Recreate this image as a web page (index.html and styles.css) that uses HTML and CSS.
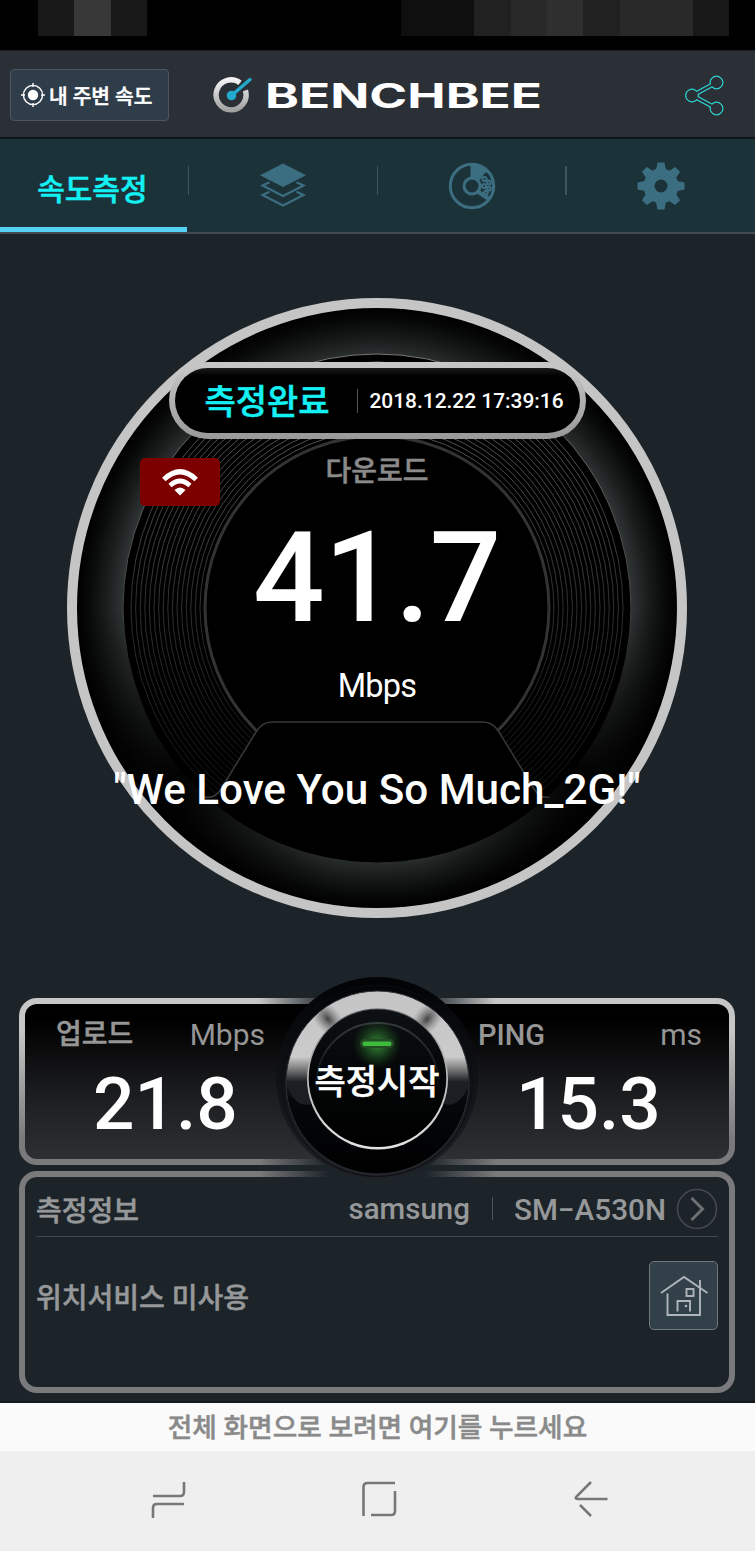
FILE: index.html
```html
<!DOCTYPE html>
<html lang="ko">
<head>
  <meta charset="UTF-8" />
  <title>BENCHBEE</title>
  <link rel="stylesheet" href="styles.css">
</head>
<body>

  <div class="status-bar">
    <div class="blocks">
      <i class="c1"></i><i class="c2"></i><i class="c1"></i>
    </div>
    <div class="blocks">
      <i class="c3"></i><i class="c3"></i><i class="c4"></i><i class="c5"></i><i class="c6"></i><i class="c4"></i><i class="c5"></i><i class="c5"></i><i class="c1"></i>
    </div>
  </div>

  <header class="header">
    <button class="near-btn">
      <svg width="24" height="24" viewBox="0 0 24 24">
        <circle cx="12" cy="12" r="9.6" fill="none" stroke="#fff" stroke-width="1.4"/>
        <circle cx="12" cy="12" r="5.2" fill="#fff"/>
        <path d="M12 0v4M12 20v4M0 12h4M20 12h4" stroke="#fff" stroke-width="1.4"/>
      </svg>
      <span>내 주변 속도</span>
    </button>
    <svg class="logo" width="330" height="40" viewBox="0 0 330 40">
      <defs>
        <linearGradient id="silver" x1="0" y1="0" x2="0" y2="1">
          <stop offset="0" stop-color="#f2f2f2"/>
          <stop offset="1" stop-color="#a2a2a2"/>
        </linearGradient>
      </defs>
      <path d="M27 7.8A15 15 0 1 0 32.4 15.4" fill="none" stroke="url(#silver)" stroke-width="5.4"/>
      <path d="M18.5 20.5L37 4.5" stroke="#22a9cb" stroke-width="3.4" stroke-linecap="round"/>
      <circle cx="18.5" cy="20.5" r="4.8" fill="#22a9cb"/>
      <text class="wordmark" x="52" y="33" textLength="277" lengthAdjust="spacingAndGlyphs">BENCHBEE</text>
    </svg>
    <svg class="share" width="42" height="42" viewBox="0 0 42 42">
      <g fill="#2fd6d6" stroke="#2fd6d6">
        <path d="M9.5 21.5L33.5 8.5M9.5 21.5L33.5 34.5" stroke-width="4.6"/>
        <circle cx="9" cy="21.5" r="6.5"/><circle cx="33.5" cy="8.5" r="6.5"/><circle cx="33.5" cy="34.5" r="6.5"/>
      </g>
      <g fill="#2b2f36">
        <path d="M9.5 21.5L33.5 8.5M9.5 21.5L33.5 34.5" stroke="#2b2f36" stroke-width="2"/>
        <circle cx="9" cy="21.5" r="5.7"/><circle cx="33.5" cy="8.5" r="5.7"/><circle cx="33.5" cy="34.5" r="5.7"/>
      </g>
    </svg>
  </header>

  <nav class="tabs">
    <div class="tab active">속도측정</div>
    <div class="tab">
      <svg width="48" height="48" viewBox="0 0 48 48" fill="none" stroke="#3c6e81" stroke-width="2.2">
        <path d="M24 1.5L47 13.2L24 25L1 13.2Z" fill="#3c6e81" stroke="none"/>
        <path d="M10.5 20.2L3.5 23.5L24 34L44.500 23.5L37.5 20.2"/>
        <path d="M10.5 29.800L3.5 33L24 43.500L44.500 33L37.500 29.800"/>
      </svg>
    </div>
    <div class="tab">
      <svg width="48" height="48" viewBox="0 0 48 48" fill="none" stroke="#3c6e81">
        <circle cx="24" cy="24" r="21.7" stroke-width="3"/>
        <path d="M22.500 2V17L31 19L37.500 10.500L41 11Q34 2 24 2Z" fill="#3c6e81" stroke="none"/>
        <circle cx="24" cy="24" r="8" stroke-width="3"/>
        <path d="M29 29L41 37" stroke-width="4.500"/>
        <g fill="none" stroke-width="2.200">
          <circle cx="36.500" cy="17" r="2"/><circle cx="41" cy="20.500" r="1.800"/>
          <circle cx="36" cy="24" r="2"/><circle cx="41" cy="26.500" r="1.800"/><circle cx="38" cy="30.500" r="1.800"/>
        </g>
      </svg>
    </div>
    <div class="tab">
      <svg width="48" height="48" viewBox="-24 -24 48 48">
        <circle r="12" fill="none" stroke="#3c6e81" stroke-width="11"/>
        <g fill="#3c6e81">
          <path id="tooth" d="M-5.200 -15L-3.500 -23.500H3.500L5.200 -15Z"/>
          <use href="#tooth" transform="rotate(45)"/><use href="#tooth" transform="rotate(90)"/>
          <use href="#tooth" transform="rotate(135)"/><use href="#tooth" transform="rotate(180)"/>
          <use href="#tooth" transform="rotate(225)"/><use href="#tooth" transform="rotate(270)"/>
          <use href="#tooth" transform="rotate(315)"/>
        </g>
      </svg>
    </div>
  </nav>

  <main>
    <section class="gauge">
      <svg class="dial" width="600" height="600" viewBox="-300 -300 600 600">
        <defs>
          <linearGradient id="ringFade" gradientUnits="userSpaceOnUse" x1="0" y1="-250" x2="0" y2="190">
            <stop offset="0" stop-color="#6a6a6a"/>
            <stop offset="0.35" stop-color="#484a4a"/>
            <stop offset="0.6" stop-color="#303232"/>
            <stop offset="1" stop-color="#151616"/>
          </linearGradient>
          <linearGradient id="edgeFade" x1="0" y1="0" x2="0" y2="1">
            <stop offset="0" stop-color="#777"/>
            <stop offset="0.5" stop-color="#444"/>
            <stop offset="0.75" stop-color="#000"/>
          </linearGradient>
        </defs>
        <circle r="254" fill="#000" stroke="url(#edgeFade)" stroke-width="1"/>
        <g id="rings" fill="none" stroke="url(#ringFade)" stroke-width="0.9"></g>
        <circle r="172" fill="#000" stroke="#333" stroke-width="3"/>
        <path d="M-169 189Q-160 190 -154 180L-121 124Q-115 114 -105 114H106Q116 114 122 124L155 180Q161 190 169 189A253.5 253.5 0 0 1 -169 189Z" fill="#000"/>
        <path d="M-172 189Q-162 191 -156 181L-121 124Q-115 114 -105 114H106Q116 114 122 124L157 181Q163 191 172 189" fill="none" stroke="#383838" stroke-width="1.5"/>
      </svg>
      <div class="result">
        <div class="pill">
          <span class="done">측정완료</span>
          <span class="date">2018.12.22 17:39:16</span>
        </div>
        <div class="label">다운로드</div>
        <div class="value">41.7</div>
        <div class="unit">Mbps</div>
        <div class="ssid">"We Love You So Much_2G!"</div>
      </div>
      <div class="wifi">
        <svg width="38" height="28" viewBox="0 0 38 28" fill="none" stroke="#fff">
          <path d="M2.8 11.5Q19 -4 35.2 11.5" stroke-width="5"/>
          <path d="M9 17.5Q19 8.5 29 17.5" stroke-width="4.6"/>
          <path d="M13.5 22Q19 17 24.5 22L19 27.5Z" fill="#fff" stroke="none"/>
        </svg>
      </div>
    </section>

    <section class="panel speeds">
      <div class="speed up">
        <div class="speed-head"><b class="ko">업로드</b><span>Mbps</span></div>
        <div class="speed-value">21.8</div>
      </div>
      <div class="speed ping">
        <div class="speed-head"><b>PING</b><span>ms</span></div>
        <div class="speed-value">15.3</div>
      </div>
      <button class="start">
        <svg width="204" height="204" viewBox="-102 -102 204 204">
          <defs>
            <linearGradient id="metal" x1="0" y1="0" x2="0" y2="1">
              <stop offset="0" stop-color="#c4c4c4"/>
              <stop offset="0.36" stop-color="#cbcbcb"/>
              <stop offset="0.43" stop-color="#777"/>
              <stop offset="0.5" stop-color="#17191c"/>
              <stop offset="0.6" stop-color="#05070a"/>
              <stop offset="1" stop-color="#000"/>
            </linearGradient>
            <linearGradient id="housing" x1="0" y1="0" x2="0" y2="1">
              <stop offset="0" stop-color="#020305"/>
              <stop offset="0.4" stop-color="#0c0e12"/>
              <stop offset="1" stop-color="#1e2226"/>
            </linearGradient>
            <linearGradient id="rim" x1="0" y1="0" x2="0" y2="1">
              <stop offset="0" stop-color="#555"/>
              <stop offset="0.3" stop-color="#aaa"/>
              <stop offset="1" stop-color="#e2e2e4"/>
            </linearGradient>
            <linearGradient id="glass" x1="0" y1="0" x2="0" y2="1">
              <stop offset="0" stop-color="#0d1114"/>
              <stop offset="0.5" stop-color="#030506"/>
              <stop offset="1" stop-color="#000"/>
            </linearGradient>
            <linearGradient id="arc" x1="0" y1="0" x2="0" y2="1">
              <stop offset="0" stop-color="#34383b"/>
              <stop offset="0.6" stop-color="#34383b" stop-opacity="0"/>
            </linearGradient>
            <radialGradient id="shade">
              <stop offset="0" stop-color="#222" stop-opacity="0.8"/>
              <stop offset="1" stop-color="#666" stop-opacity="0"/>
            </radialGradient>
            <radialGradient id="led">
              <stop offset="0" stop-color="#45b845" stop-opacity="0.75"/>
              <stop offset="1" stop-color="#2d7a2d" stop-opacity="0"/>
            </radialGradient>
            <clipPath id="metalClip"><circle cx="0.5" cy="4.5" r="91"/></clipPath>
          </defs>
          <circle r="101" fill="url(#housing)"/>
          <circle cy="3" r="95.5" fill="none" stroke="#0c0d10"/>
          <circle cx="0.5" cy="4.5" r="91.5" fill="url(#metal)" stroke="#2c2f33"/>
          <g clip-path="url(#metalClip)">
            <ellipse cx="-49" cy="-59" rx="13" ry="22" fill="url(#shade)" transform="rotate(-40 -49 -59)"/>
            <ellipse cx="50" cy="-59" rx="13" ry="22" fill="url(#shade)" transform="rotate(40 50 -59)"/>
            <path d="M-90 8C-84 24 -75 29 -66 26V4H-90ZM91 8C85 24 76 29 67 26V4H91Z" fill="#1b1e22"/>
          </g>
          <circle cx="0.5" cy="1" r="70.5" fill="url(#rim)"/>
          <circle cx="0.5" cy="0.2" r="68.8" fill="url(#glass)"/>
          <circle cx="0.5" cy="6" r="61" fill="none" stroke="url(#arc)" stroke-width="2"/>
          <circle cy="-34" r="24" fill="url(#led)"/>
          <rect x="-17" y="-39" width="34" height="9" rx="4.5" fill="#244a26"/>
          <rect x="-14.5" y="-36.5" width="29" height="4.5" rx="2" fill="#3dbb3a"/>
        </svg>
        <span>측정시작</span>
      </button>
    </section>

    <section class="panel info">
      <div class="info-row">
        <span class="info-title ko">측정정보</span>
        <span class="brand">samsung</span>
        <span class="model">SM−A530N</span>
        <svg width="42" height="42" viewBox="0 0 42 42" fill="none">
          <circle cx="21" cy="21" r="19.5" stroke="#474b50" stroke-width="1.5"/>
          <path d="M15.5 10L26.5 21L15.5 32" stroke="#6c7075" stroke-width="3"/>
        </svg>
      </div>
      <div class="location-row">
        <span class="ko">위치서비스 미사용</span>
        <button class="home-btn">
          <svg width="48" height="42" viewBox="0 0 48 42" fill="none" stroke="#b0b5bb" stroke-width="1.9">
            <path d="M1 18L24 2L47.5 18"/>
            <path d="M7.5 18.5V40H40V5"/>
            <rect x="26.5" y="14" width="7" height="7"/>
            <path d="M17.500 36.500V26H30V36.500"/>
            <circle cx="26" cy="31" r="1.300" fill="#b0b5bb" stroke="none"/>
          </svg>
        </button>
      </div>
    </section>
  </main>

  <div class="hint">전체 화면으로 보려면 여기를 누르세요</div>

  <footer class="nav-bar">
    <svg width="36" height="38" viewBox="0 0 36 38">
      <path d="M33 1V11Q33 15 29 15H2M2 37V27Q2 23 6 23H33"/>
    </svg>
    <svg width="36" height="38" viewBox="0 0 36 38">
      <path d="M1.5 35V6Q1.5 2 5.5 2H33M33 10V30Q33 34 29 34H9"/>
    </svg>
    <svg width="36" height="38" viewBox="0 0 36 38">
      <path d="M18 1L3.500 15.500Q1.500 18 4.500 18H34.500M7 24L18 35"/>
    </svg>
  </footer>

  <script>
    // grooves between the inner disc and the bezel
    const rings = document.getElementById('rings');
    for (let r = 177; r < 248; r += 4.6) {
      const c = document.createElementNS('http://www.w3.org/2000/svg', 'circle');
      c.setAttribute('r', r);
      rings.appendChild(c);
    }
  </script>
</body>
</html>
```
FILE: styles.css
```css
* {
  box-sizing: border-box;
}

body {
  margin: 0;
  width: 755px;
  height: 1551px;
  overflow: hidden;
  display: flex;
  flex-direction: column;
  background: #1d2429;
  color: #fff;
  font-family: Roboto, "Noto Sans CJK KR", sans-serif;
  font-weight: 500;
}

svg {
  display: block;
  flex: none;
}

button {
  padding: 0;
  font: inherit;
  color: inherit;
}

/* korean text is drawn a touch heavier */
.ko, .near-btn, .tab.active, .done, .label, .start, .hint {
  -webkit-text-stroke: 0.5px currentColor;
}

/* status bar */
.status-bar {
  height: 50px;
  padding: 0 26px 0 38px;
  display: flex;
  justify-content: space-between;
  background: #000;
}

.blocks {
  display: flex;
  height: 36px;
}

.blocks i { width: 36.4px; }
.c1 { background: #181818; }
.c2 { background: #383838; }
.c3 { background: #0f0f0f; }
.c4 { background: #212121; }
.c5 { background: #292929; }
.c6 { background: #2f2f2f; }

/* header */
.header {
  height: 89px;
  padding: 2px 30px 1px 10px;
  display: flex;
  align-items: center;
  background: #2b2f36;
  border-top: 1px solid #1c1f22;
  border-bottom: 2px solid #10171b;
}

.near-btn {
  width: 159px;
  height: 52px;
  padding: 1px 0 0 10px;
  display: flex;
  align-items: center;
  gap: 4px;
  background: #2f3c49;
  border: 1px solid #4d565f;
  border-radius: 4px;
  font-size: 20.3px;
  white-space: nowrap;
}

.logo {
  margin-left: 44px;
}

.wordmark {
  font-family: Inter, sans-serif;
  font-size: 33.5px;
  font-weight: 700;
  fill: #fff;
}

.share {
  margin-left: auto;
}

/* tabs */
.tabs {
  height: 95px;
  display: flex;
  background: #1c3239;
  border-bottom: 2px solid #434b50;
}

.tab {
  position: relative;
  width: 25%;
  display: flex;
  align-items: center;
  justify-content: center;
}

.tab + .tab::before {
  content: "";
  position: absolute;
  left: -1px;
  top: 27px;
  width: 1.5px;
  height: 29px;
  background: #3d565c;
}

.tab.active {
  color: #14f1f5;
  font-size: 30px;
  padding: 2px 4px 0 0;
}

.tab.active::after {
  content: "";
  position: absolute;
  left: 0;
  bottom: 0;
  width: 187px;
  height: 5px;
  background: #55d2f3;
}

/* gauge */
main {
  height: 1169px;
  border-bottom: 2px solid #15191d;
}

.gauge {
  position: relative;
  width: 620px;
  height: 620px;
  margin: 64px 0 80px 67px;
  border: 10px solid #c5c5c5;
  border-radius: 50%;
  background:
    conic-gradient(rgba(0,0,0,0.1), rgba(0,0,0,0.25) 35deg, rgba(0,0,0,0) 65deg, rgba(0,0,0,0) 90deg, rgba(0,0,0,0.95) 130deg, rgba(0,0,0,0.15) 170deg, rgba(0,0,0,0.15) 190deg, rgba(0,0,0,0.95) 230deg, rgba(0,0,0,0) 270deg, rgba(0,0,0,0) 295deg, rgba(0,0,0,0.25) 325deg, rgba(0,0,0,0.1)),
    radial-gradient(circle at center, #303434 254px, #1c1e1e 270px, #080909 288px, #000 300px);
}

.dial {
  position: absolute;
  left: 0;
  top: 0;
}

.result {
  position: relative;
  display: flex;
  flex-direction: column;
  align-items: center;
  white-space: nowrap;
}

.pill {
  width: 417px;
  height: 77px;
  margin-top: 54px;
  display: flex;
  align-items: center;
  padding-left: 30px;
  border: 6px solid transparent;
  border-radius: 39px;
  background:
    linear-gradient(#1b1b1b, #000 8px) padding-box,
    linear-gradient(#c8c8c8, #999) border-box;
}

.done {
  width: 153px;
  height: 24px;
  line-height: 27px;
  color: #14f1f5;
  font-size: 34px;
  border-right: 1px solid #555;
}

.date {
  margin-left: 12px;
  font-size: 20.9px;
}

.label {
  margin-top: 13px;
  line-height: 40px;
  font-size: 28px;
  color: #8a8a8a;
}

.value {
  margin-top: 22px;
  font-size: 126px;
  line-height: 128px;
  letter-spacing: -0.5px;
}

.unit {
  margin-top: 24px;
  font-size: 32.5px;
  line-height: 40px;
  font-weight: 400;
  letter-spacing: -0.8px;
}

.ssid {
  margin-top: 59px;
  font-size: 42.2px;
  line-height: 50px;
}

.wifi {
  position: absolute;
  left: 63px;
  top: 150px;
  width: 80px;
  height: 48px;
  display: flex;
  align-items: center;
  justify-content: center;
  border-radius: 5px;
  background: #7c0000;
}

/* panels */
.panel {
  width: 716px;
  margin: 0 0 6px 19px;
  border: 6px solid transparent;
  border-radius: 18px;
}

.speeds {
  position: relative;
  height: 167px;
  display: flex;
  background:
    linear-gradient(#000 10%, #1a1b1d 55%, #2d3033) padding-box,
    linear-gradient(90deg, rgba(29,36,41,0) 240px, #1d2429 310px, #1d2429 406px, rgba(29,36,41,0) 476px) border-box,
    linear-gradient(#c6c6c6 20%, #7a797b 85%) border-box;
}

.speed {
  width: 50%;
  padding-top: 13px;
}

.up { padding-left: 31px; padding-right: 112px; }
.ping { padding-left: 101px; padding-right: 27px; }

.speed-head {
  display: flex;
  justify-content: space-between;
  line-height: 36px;
  font-size: 29px;
  color: #969696;
}

.speed-head b { font-weight: 500; }
.speed-head .ko { font-size: 28px; }
.speed-head span { font-weight: 400; font-size: 30px; }

.speed-value {
  margin-top: 14px;
  font-size: 73px;
  line-height: 74px;
}

.up .speed-value { padding-left: 37px; }
.ping .speed-value { padding-left: 38px; }

.start {
  position: absolute;
  left: 250px;
  top: -28px;
  width: 204px;
  height: 204px;
  border: none;
  background: none;
  font-size: 34px;
}

.start span {
  position: absolute;
  left: 0;
  right: 0;
  top: 84px;
  line-height: 44px;
  white-space: nowrap;
}

.info {
  height: 222px;
  padding: 10px 11px;
  font-size: 28px;
  color: #96989a;
  background:
    linear-gradient(#1d2429, #1d2429) padding-box,
    linear-gradient(90deg, rgba(29,36,41,0) 240px, #1d2429 310px, #1d2429 406px, rgba(29,36,41,0) 476px) border-box 0 0 / 100% 20px no-repeat,
    linear-gradient(#7a797b, #7a797b) border-box;
}

.info-row {
  height: 50px;
  display: flex;
  align-items: center;
  padding-bottom: 5px;
  border-bottom: 1.5px solid #44484c;
}

.info-title {
  margin-right: auto;
}

.brand {
  padding-right: 22px;
  font-size: 29.5px;
}

.model {
  position: relative;
  padding-left: 22px;
  margin-right: 10px;
  font-size: 29.7px;
}

.model::before {
  content: "";
  position: absolute;
  left: 0;
  top: 5px;
  width: 1.5px;
  height: 23px;
  background: #505458;
}

.location-row {
  display: flex;
  align-items: center;
  justify-content: space-between;
  padding-top: 24px;
}

.home-btn {
  width: 69px;
  height: 69px;
  display: flex;
  align-items: center;
  justify-content: center;
  background: #32404a;
  border: 1px solid #6f777e;
  border-radius: 5px;
}

/* bottom */
.hint {
  height: 48px;
  line-height: 51px;
  text-align: center;
  font-size: 26.7px;
  color: #8a8a8a;
  background: #fafafa;
}

.nav-bar {
  flex: 1;
  display: flex;
  justify-content: space-between;
  padding: 30px 146px 0 151px;
  background: #efefef;
}

.nav-bar path {
  fill: none;
  stroke: #777;
  stroke-width: 2.6;
}
```
